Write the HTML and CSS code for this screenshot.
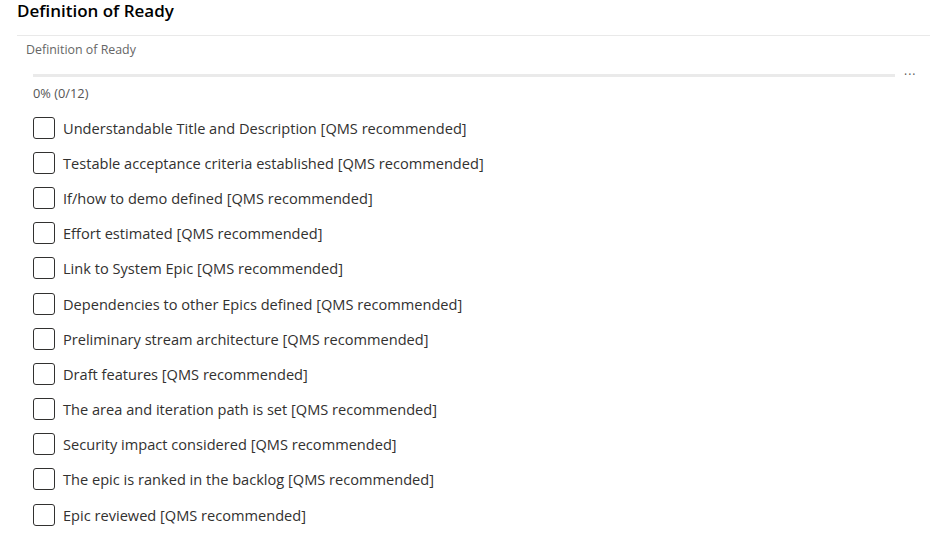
FILE: index.html
```html
<!DOCTYPE html>
<html lang="en">
<head>
  <meta charset="UTF-8" />
  <title>Definition of Ready</title>
  <link rel="stylesheet" href="styles.css">
</head>
<body>
  <h1 class="page-title">Definition of Ready</h1>
  <div class="group">
    <div class="group-label">Definition of Ready</div>
    <div class="progress-row">
      <div class="progress-track"><div class="progress-fill" style="width: 0%"></div></div>
      <span class="more">&middot;&middot;&middot;</span>
    </div>
    <div class="progress-text">0% (0/12)</div>

    <ul class="checklist">
      <li><span class="box"></span>Understandable Title and Description [QMS recommended]</li>
      <li><span class="box"></span>Testable acceptance criteria established [QMS recommended]</li>
      <li><span class="box"></span>If/how to demo defined [QMS recommended]</li>
      <li><span class="box"></span>Effort estimated [QMS recommended]</li>
      <li><span class="box"></span>Link to System Epic [QMS recommended]</li>
      <li><span class="box"></span>Dependencies to other Epics defined [QMS recommended]</li>
      <li><span class="box"></span>Preliminary stream architecture [QMS recommended]</li>
      <li><span class="box"></span>Draft features [QMS recommended]</li>
      <li><span class="box"></span>The area and iteration path is set [QMS recommended]</li>
      <li><span class="box"></span>Security impact considered [QMS recommended]</li>
      <li><span class="box"></span>The epic is ranked in the backlog [QMS recommended]</li>
      <li><span class="box"></span>Epic reviewed [QMS recommended]</li>
    </ul>
  </div>
</body>
</html>
```

FILE: styles.css
```css
body {
  font-family: 'Open Sans', 'Noto Sans', sans-serif;
  color: #323130;
  margin: 0;
  padding: 0 0 0 17px;
  background: white;
}
.page-title {
  font-size: 17px;
  font-weight: 600;
  color: #000;
  margin: 0;
  line-height: 22px;
  height: 36px;
  border-bottom: 1px solid #e9e9e9;
  box-sizing: border-box;
}
.group {
  padding-left: 9px;
}
.group-label {
  font-size: 12.4px;
  color: #666;
  margin-top: 5px;
  line-height: 18px;
}
.progress-row {
  display: flex;
  align-items: center;
  margin-top: 12px;
  padding-left: 7px;
}
.progress-track {
  flex: 0 0 862px;
  height: 3px;
  background: #eaeaea;
}
.progress-fill {
  height: 100%;
  background: #0078d4;
}
.more {
  margin-left: 9px;
  font-size: 12px;
  color: #555;
  line-height: 8px;
  letter-spacing: 1px;
}
.progress-text {
  font-size: 12.8px;
  color: #555;
  margin-top: 6px;
  padding-left: 7px;
  line-height: 16px;
}
.checklist {
  list-style: none;
  margin: 9px 0 0 0;
  padding: 0 0 0 7px;
}
.checklist li {
  display: flex;
  align-items: center;
  height: 35.2px;
  font-size: 14.6px;
  color: #323130;
}
.box {
  width: 20px;
  height: 20px;
  border: 1px solid #323130;
  border-radius: 3px;
  margin-right: 8px;
  flex-shrink: 0;
}
```
